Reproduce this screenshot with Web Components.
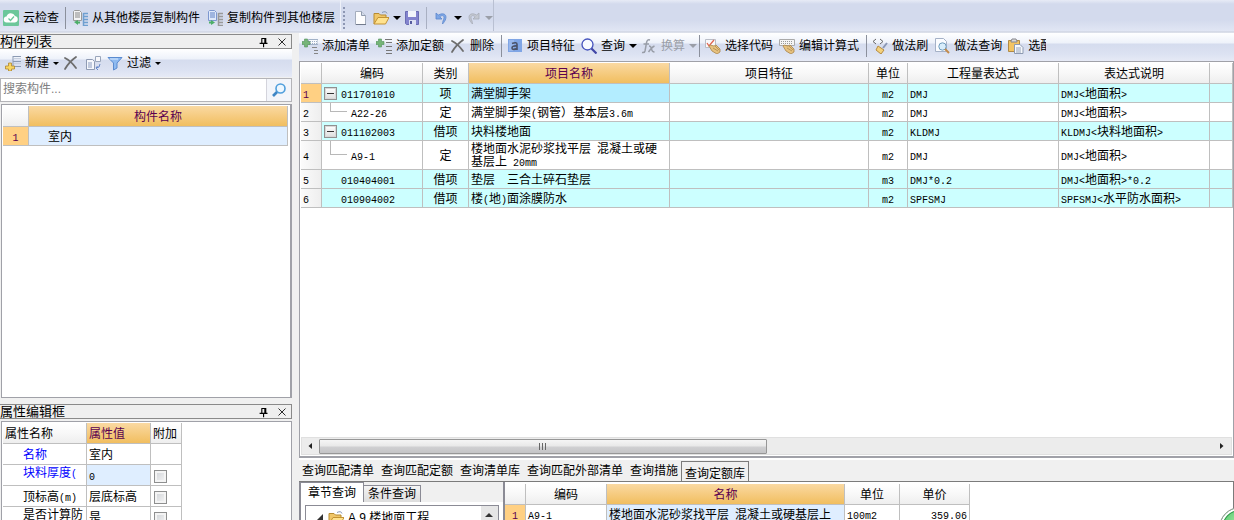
<!DOCTYPE html>
<html lang="zh-CN">
<head>
<meta charset="utf-8">
<title>构件做法</title>
<style>
html,body{height:100%}
body{margin:0;overflow:hidden;background:#f0f0f0;color:#000;font:12px/16px "Liberation Sans","Noto Sans CJK SC",sans-serif}
</style>
</head>
<body>
<cost-app></cost-app>
<script>
const ICONS = {
cloud:`<rect width="16" height="16" rx="1" fill="#6cc79b"/><path d="M4 12.500a3 3 0 0 1-.5-6 4.500 4.500 0 0 1 8.500-.5 3.300 3.300 0 0 1 0 6.500z" fill="#fff"/><path d="M5.500 8.500l2 2 3.500-4" fill="none" stroke="#6cc79b" stroke-width="1.300"/>`,
copyfrom:`<path d="M2.500.5h5l2 2v8h-8v-9z" fill="#f4f4f4" stroke="#9a9a9a"/><path d="M3 3h5M3 5h5M3 7h5" stroke="#888"/><path d="M11.500 3v13M11.500 3.500H16M11.500 6.500H16M11.500 9.500H16M11.500 12.500H16M11.500 15.500H16" stroke="#6f9fd0" stroke-width="1.500"/><path d="M2 12l4-2v1.500h2v2H6V15z" fill="#4cae68"/>`,
copyto:`<path d="M2.500.5h5l2 2v8h-8v-9z" fill="#dfe9fb" stroke="#7d97cf"/><path d="M3 3h5M3 5h5M3 7h5" stroke="#5f80c4"/><path d="M11.500 3v13M11.500 3.500H16M11.500 6.500H16M11.500 9.500H16M11.500 12.500H16M11.500 15.500H16" stroke="#999" stroke-width="1.500"/><path d="M8 12.500l-4-2.500v1.500H2v2h2V15z" fill="#4cae68"/>`,
page:`<path d="M3.500 1.500h6l4 4v9h-10z" fill="#fdfdfe" stroke="#a4adbd"/><path d="M9.500 1.500v4h4" fill="#d4dcea" stroke="#8f9aad"/><path d="M4 14.500h10" stroke="#727b8c"/>`,
folder:`<path d="M1 14V3.500h5L7.500 5H13v3" fill="#f0c668" stroke="#b78b31"/><path d="M1 14L5 7.500h11L12.500 14z" fill="#ffe28e" stroke="#c39334"/><path d="M9 2.500q4-2 5 1" fill="none" stroke="#8295b5"/>`,
save:`<path d="M1.500 1.500h13v13h-12l-1-1z" fill="#8384ce" stroke="#6a6db3"/><path d="M4 1h8v6H4z" fill="#f2f5fb"/><path d="M5 10h7v5H5z" fill="#dde1f3"/><path d="M6 11h2v3H6z" fill="#555b9d"/>`,
undo:`<path d="M2 3v6h6L5.800 6.800C9 4 11.500 6.500 9 11l-.5 3C14.500 8 12.500 1 4.300 5z" fill="#7ea7e6" stroke="#5c86cd" stroke-width=".8"/>`,
redo:`<path d="M14 3v6H8l2.200-2.200C7 4 4.500 6.500 7 11l.5 3C1.500 8 3.500 1 11.700 5z" fill="#c4c8d1" stroke="#a7acb8" stroke-width=".8"/>`,
create:`<path d="M8 1v11M8 1.500h8M8 6.500h8M8 11.500h8" stroke="#8c9bb3" fill="none"/><path d="M9 3.500h7M9 8.500h7" stroke="#c8d0de"/><path d="M3.500 8h3v3h3v3h-3v2h-3v-2h-3v-3h3z" fill="#f8d663" stroke="#ae8730" stroke-width=".8"/>`,
x:`<path d="M2 3q6 3 11 10M13 2Q6 7 2 14" stroke="#6d6d6d" stroke-width="1.800" fill="none" stroke-linecap="round"/>`,
transfer:`<path d="M1.500 4.500h6l2 2v8h-8z" fill="#f5f7fc" stroke="#8f9bb3"/><path d="M3 8h4M3 10h4M3 12h4" stroke="#8b9cbf"/><path d="M10.500 1.500h5v5h-5z" fill="#f8f8fb" stroke="#9aa6bb"/><path d="M15 9q0 4-4 4m1.500-2L11 13l2 2" fill="none" stroke="#6687c8"/>`,
funnel:`<path d="M1 2.500h14L10 8v5l-3.500 2V8z" fill="#8ebaf0" stroke="#5a8bd0"/><path d="M3 4h8" stroke="#d9eaff"/>`,
zoom:`<circle cx="9.500" cy="6.500" r="4.500" fill="#edf7ff" stroke="#4f9edc" stroke-width="1.600"/><path d="M6 10l-4 4" stroke="#3f86c5" stroke-width="2.600"/>`,
addlist:`<path d="M6.500 1.500H16v5H6.500z" fill="#f7f9fc" stroke="#a2b2c8"/><path d="M8 3.500h7M8 5.500h7" stroke="#9eaec7" stroke-dasharray="1 1"/><path d="M10 9.500h5M12 12.500h4M12 15.500h4" stroke="#858585"/><path d="M2.500 1h3v2.500H8v3H5.500V9h-3V6.500H0v-3h2.500z" fill="#75b578" stroke="#52905a" stroke-width=".6"/>`,
addquota:`<path d="M9 1.500h7M10 4.500h6M10 8.500h6M10 12.500h6M10 15.500h6" stroke="#777"/><path d="M2.500 1h3v2.500H8v3H5.500V9h-3V6.500H0v-3h2.500z" fill="#75b578" stroke="#52905a" stroke-width=".6"/>`,
feature:`<path d="M1 1h14v13H1z" fill="#7fa5e5"/><path d="M2 2h5v11H2z" fill="#98b7ec"/><path d="M5 5.500q5-2 5 1V12M10 8q-5-.5-5 2t5 .5" fill="none" stroke="#4a5268" stroke-width="1.600"/>`,
search:`<circle cx="6.500" cy="6.500" r="5.500" fill="#f8fbff" stroke="#4553bd" stroke-width="1.300"/><path d="M10.500 10.500l5 5" stroke="#4146a6" stroke-width="2.200"/>`,
fx:`<path d="M9 2q-3-1-3.500 3L4 13q-.5 2-3 1.500M2.500 6H8M8 8q2 0 2.500 3t3 3M13.500 8Q11 9 7.500 14" fill="none" stroke="#989da7" stroke-width="1.500"/>`,
pick:`<path d="M.5 1.500h10v8H.5z" fill="#f9f9fb" stroke="#b9bdc7"/><path d="M2 5l2 3 5-6" fill="none" stroke="#e0634f" stroke-width="1.300"/><path d="M5 7l4 1 2-1 4 4v3l-3 2-5-3-3-5z" fill="#e7c27f" stroke="#a98449" stroke-width=".8"/><path d="M8 10l5 3M10 8l4 4" stroke="#ad8a50" stroke-width=".8"/>`,
formula:`<path d="M.5 1.500h15v6H.5z" fill="#f5f5f5" stroke="#aaa"/><path d="M2 3.500h12M2 5.500h12" stroke="#999" stroke-dasharray="1 1"/><path d="M5 7l4 1 2-1 4 4v3l-3 2-5-3-3-5z" fill="#e7c27f" stroke="#a98449" stroke-width=".8"/><path d="M8 10l5 3M10 8l4 4" stroke="#ad8a50" stroke-width=".8"/>`,
brush:`<path d="M4 1L1 3.500 4 6M8 1l3 2.500L8 6" fill="none" stroke="#666"/><path d="M15 5l-4 5" stroke="#8a97b5" stroke-width="2"/><path d="M6 8l6 4-3 4-5-4z" fill="#f3d17c" stroke="#b68b40"/>`,
methodsearch:`<path d="M1.500.5h8l3 3v10h-11z" fill="#fbfcff" stroke="#a5b1c7"/><circle cx="8.500" cy="8.500" r="3.700" fill="#d8edfb" stroke="#6f9cbd"/><path d="M11 11l4 4" stroke="#c38b4b" stroke-width="2"/>`,
paste:`<path d="M.5 2.500h11v11H.5z" fill="#f3c462" stroke="#b18a45"/><path d="M3 3l1-2h4l1 2v1H3z" fill="#dadada" stroke="#85858a"/><path d="M6.500 6.500H12l3 3v6H6.500z" fill="#f7f9fc" stroke="#8d9ab1"/><path d="M8 10h5M8 12h5M8 14h5" stroke="#94a3bb"/>`,
pin:`<path d="M5 4h5v5M5.500 4v5M9 4v5M3 9.500h9M7.500 10v4" stroke="#000" stroke-width="1.300" fill="none"/>`,
close:`<path d="M4 4l8 8M12 4l-8 8" stroke="#222" stroke-width="1.100"/>`,
left:`<path d="M10 5v6L6.500 8z" fill="#222"/>`,
right:`<path d="M6 5v6L9.500 8z" fill="#222"/>`,
up:`<path d="M4 10h8L8 6z" fill="#333"/>`,
open:`<path d="M11 4v7H4z" fill="#333"/>`
};
const sheet = css => `<style>*{box-sizing:border-box}${css}</style>`;
/* Latin runs are set in half-width letters beside the full-width ideographs. */
const mixed = s => s.replace(/[\x20-\x7e]+/g, m => `<span class="half">${m.replace(/</g,'&lt;').replace(/>/g,'&gt;')}</span>`);
const HALF = `.half{font:10px/10px "Liberation Mono",monospace;white-space:pre-wrap}`;
const define = (name, html) => customElements.define(name, class extends HTMLElement{
  connectedCallback(){
    if(this.shadowRoot) return;
    const t = document.createElement('template');
    t.innerHTML = typeof html === 'function' ? html(this) : html;
    this.attachShadow({mode:'open'}).append(t.content.cloneNode(true));
  }
});

define('ui-icon', el => sheet(`:host{display:block;flex:none;width:16px;height:16px}svg{display:block;width:100%;height:100%}`) +
  `<svg viewBox="0 0 16 16" aria-hidden="true">${ICONS[el.getAttribute('name')]}</svg>`);

define('tool-button', el => sheet(`
:host{display:block;flex:none}
button{display:flex;align-items:center;gap:4px;height:24px;margin:0;padding:0 3px;border:0;background:none;font:inherit;color:inherit;white-space:nowrap}
:host([menu]) button{padding-right:1px}
button:disabled{color:#9a9ea8}
i{border:solid transparent;border-width:var(--caret,4px) var(--caret,4px) 0;border-top-color:currentColor}
`) + `<button ${el.hasAttribute('disabled')?'disabled':''} ${el.title?`aria-label="${el.title}"`:''}><ui-icon name="${el.getAttribute('icon')}"></ui-icon>${el.textContent.trim()?'<slot></slot>':''}${el.hasAttribute('menu')?'<i></i>':''}</button>`);

define('tool-bar', sheet(`
:host{display:flex;align-items:center;height:28px;flex:none;overflow:hidden;background:linear-gradient(#fff,#eef2fa 35%,#d5dcee 40%,#dce2f2 75%,#e6eaf6)}
::slotted(hr){flex:none;width:1px;height:22px;margin:0 2px 0 4px;border:0;background:#8b909c}
::slotted(hr.tight){margin-left:1px}
`) + `<slot></slot>`);

define('dock-title', sheet(`
:host{display:flex;align-items:center;flex:none;height:15px;border:1px solid #8a8a8a;border-left:0;background:#efefef}
h2{flex:1;margin:0;font-size:13px;line-height:13px;font-weight:400}
button{display:block;width:18px;height:13px;border:0;padding:0 2px;background:none;overflow:hidden}
ui-icon{width:14px;height:14px}
`) + `<h2><slot></slot></h2><button aria-label="固定"><ui-icon name="pin"></ui-icon></button><button aria-label="关闭"><ui-icon name="close"></ui-icon></button>`);

define('search-box', sheet(`
:host{display:flex;flex:none;height:24px;border:1px solid #b4b4b8;background:#fff}
input{flex:1;min-width:0;border:0;border-right:1px solid #d4d4dc;padding:0 2px 2px;font:inherit;color:#333;outline:0}
input::placeholder{color:#808080;opacity:1}
button{width:24px;border:0;padding:0 4px;background:#f3f5fa}
`) + `<input type="text" aria-label="搜索构件" placeholder="搜索构件..."><button aria-label="搜索"><ui-icon name="zoom"></ui-icon></button>`);

const GRID = HALF + `
:host{display:block}
table{border-collapse:separate;border-spacing:0;table-layout:fixed;line-height:12px}
th,td{padding:2px 2px 0;border:solid #bfbfbf;border-width:0 1px 1px 0;font-weight:400;text-align:left;overflow:hidden}
thead th{height:21px;text-align:center;background:linear-gradient(#fff,#f8f8f8 50%,#eee)}
thead th.on{background:linear-gradient(#fad9a2,#f1be5f);color:#5a0050}
td{background:#fff}
tbody th{background:linear-gradient(90deg,#fbfbfb,#eee)}
tbody th.on{background:#ffd083;color:#5a0050}
.c{text-align:center}.r{text-align:right}`;

/* Grid of rows; the first row is the current one. */
const grid = (cols, rows, css) => {
  const fixed = cols.every(c => c.w);
  return sheet(GRID + css) + `<table style="width:${fixed ? cols.reduce((a,c)=>a+c.w,0)+'px' : '100%'}"><colgroup>${cols.map(c=>`<col${c.w?` style="width:${c.w}px"`:''}>`).join('')}</colgroup>
  <thead><tr>${cols.map(c=>`<th class="${c.on?'on':''}" scope="col">${c.t}</th>`).join('')}</tr></thead>
  <tbody>${rows.map((r,n)=>`<tr class="${r.cls||''}"><th scope="row" class="${n===0?'on':''}">${mixed(String(n+1))}</th>${r.cells.map((c,i)=>`<td class="${cols[i+1].a||''} ${n===0&&cols[i+1].on?'sel':''}">${i===0&&r.tree==='open'?'<button aria-label="折叠"></button>':''}${i===0&&r.tree==='child'?'<b></b>':''}${mixed(c)}</td>`).join('')}</tr>`).join('')}</tbody></table>`;
};

define('component-list', grid([{w:26,t:''},{w:0,t:'构件名称',on:1}], [{cells:['室内']}],
  `tbody th{text-align:center}tbody tr{height:19px}tbody td{padding-left:19px}td.sel{background:#dfeeff}`));

define('item-grid', grid([
  {w:21,t:''},{w:101,t:'编码',a:'code'},{w:46,t:'类别',a:'c'},{w:201,t:'项目名称',on:1},{w:199,t:'项目特征'},
  {w:39,t:'单位',a:'c'},{w:151,t:'工程量表达式'},{w:151,t:'表达式说明'},{t:''}],
 [{cls:'q',tree:'open',cells:['011701010','项','满堂脚手架','','m2','DMJ','DMJ<地面积>','']},
  {tree:'child',cells:['A22-26','定','满堂脚手架(钢管）基本层3.6m','','m2','DMJ','DMJ<地面积>','']},
  {cls:'q',tree:'open',cells:['011102003','借项','块料楼地面','','m2','KLDMJ','KLDMJ<块料地面积>','']},
  {cls:'tall',tree:'child',cells:['A9-1','定','楼地面水泥砂浆找平层 混凝土或硬基层上 20mm','','m2','DMJ','DMJ<地面积>','']},
  {cls:'q',cells:['010404001','借项','垫层　三合土碎石垫层','','m3','DMJ*0.2','DMJ<地面积>*0.2','']},
  {cls:'q',cells:['010904002','借项','楼(地)面涂膜防水','','m2','SPFSMJ','SPFSMJ<水平防水面积>','']}],
 `tbody tr{height:19px}tbody tr.tall{height:29px}.tall td{line-height:13px}.q td{background:#cff}.q td.sel{background:#b3edff}
 td:nth-child(4){padding-right:3px}
 td.code{position:relative;padding-left:19px}
 td.code:has(b){padding-left:29px}
 td button{position:absolute;left:2px;top:3px;width:13px;height:13px;padding:0;border:1px solid #909090;outline:1px solid #d8d8d8;outline-offset:-2px;background:linear-gradient(#333,#333) center/7px 1px no-repeat,linear-gradient(#fff,#ddd)}
 td b{position:absolute;left:8px;top:0;bottom:50%;width:17px;border:solid #b8b8b8;border-width:0 0 1px 1px}`));

define('quota-grid', grid([{w:21,t:''},{w:81,t:'编码'},{w:238,t:'名称',on:1},{w:55,t:'单位'},{w:70,t:'单价',a:'r'}],
 [{cells:['A9-1','楼地面水泥砂浆找平层 混凝土或硬基层上','100m2','359.06']}],
 `tbody th{text-align:center}tbody tr{height:19px}td.sel{background:#dfeeff}`));

define('property-grid', () => {
  const rows = [['名称','室内',0,'key'],['块料厚度(','0',1,'key top sel'],['顶标高(m)','层底标高',1,''],['是否计算防','是',1,'top']];
  return sheet(GRID + `table{width:179px}tbody tr{height:21px}thead th{text-align:left}
  tbody th{background:#fff;padding-left:20px;white-space:nowrap}.key th{color:#00f}.top th{vertical-align:top}.sel td.v{background:#dfeeff}
  input{appearance:none;display:block;width:13px;height:13px;margin:1px 0 0 1px;border:1px solid #8e8f8f;background:linear-gradient(135deg,#cfd2d6,#f6f6f6);box-shadow:inset 0 0 0 2px #f4f4f4}`) +
  `<table><colgroup><col style="width:84px"><col style="width:64px"><col style="width:31px"></colgroup>
  <thead><tr><th scope="col">属性名称</th><th scope="col" class="on">属性值</th><th scope="col">附加</th></tr></thead><tbody>` +
  rows.map(r=>`<tr class="${r[3]}"><th scope="row">${mixed(r[0])}</th><td class="v">${mixed(r[1])}</td><td>${r[2]?`<input type="checkbox" aria-label="${r[0]} 附加">`:''}</td></tr>`).join('') + `</tbody></table>`;
});

define('scroll-strip', sheet(`
:host{display:flex;align-items:center;flex:none;height:18px;margin:0 1px 1px 0;border:1px solid #e0e0e0;background:#ececec}
button{border:0;padding:0;background:none;width:17px}
.track{flex:1;height:15px}
.thumb{display:flex;justify-content:center;align-items:center;gap:2px;width:50%;height:15px;border:1px solid #979797;border-radius:1px;background:linear-gradient(#f5f5f5,#e8e8e8 48%,#d0d0d2 52%,#c4c4c6)}
i{width:1px;height:7px;background:#666}
`) + `<button aria-label="向左"><ui-icon name="left"></ui-icon></button><div class="track"><div class="thumb"><i></i><i></i><i></i></div></div><button aria-label="向右"><ui-icon name="right"></ui-icon></button>`);

define('query-pane', sheet(`
:host{display:flex;flex-direction:column;min-height:0;border-top:2px solid #fff;padding-top:1px}
button{font:inherit;color:inherit;border:0;background:none;padding:0;line-height:14px;white-space:nowrap}
nav{display:flex;align-items:center;gap:7px;height:20px;padding-left:3px;flex:none}
nav .on{align-self:flex-end;height:20px;margin-left:-4px;padding:4px 3px 0;border:1px solid #7b7b7b;border-bottom:0}
.body{display:flex;flex:1;min-height:0;border-top:1px solid #7b7b7b;border-right:1px solid #7b7b7b;background:#fff;overflow:hidden}
.tree{display:flex;flex-direction:column;width:205px;flex:none;border:1px solid #8b8b95;border-width:0 1px 0 2px;background:#fff}
.tabs{display:flex;align-items:flex-end;height:20px;flex:none;background:#f0f0f0}
.tabs button{height:17px;padding:0 4px;border:1px solid #8b8b95;border-bottom:0;background:linear-gradient(#f4f4f4,#ddd)}
.tabs .on{height:20px;padding:0 7px;border-width:1px 1px 0 0;background:#fff;margin-right:-1px}
.view{display:flex;flex:1;min-height:0;margin:3px 4px 0 4px;border:1px solid #8b8b95;border-bottom:0;overflow:hidden}
.node{display:flex;align-items:flex-start;flex:1;padding:4px 0 0 6px}
.node span{padding-left:4px}
.view button{width:17px;height:17px;background:#e6e6e6}
quota-grid{flex:1;padding-top:2px;border-left:1px solid #8b8b95}
`) + `<nav><button>查询匹配清单</button><button>查询匹配定额</button><button>查询清单库</button><button>查询匹配外部清单</button><button>查询措施</button><button class="on">查询定额库</button></nav>
<div class="body"><div class="tree"><div class="tabs"><button class="on">章节查询</button><button>条件查询</button></div>
<div class="view"><div class="node"><ui-icon name="open"></ui-icon><ui-icon name="folder"></ui-icon><span>A.9 楼地面工程</span></div><button aria-label="向上"><ui-icon name="up"></ui-icon></button></div></div>
<quota-grid></quota-grid></div>`);

define('main-bar', sheet(`
:host{display:flex;height:33px;background:linear-gradient(#e7ebf6,#d3daed 4px,#d3daed 60%,#e1e6f4 31px,#c9cedb 32px,#eef1f8 33px)}
.g{display:flex;align-items:center;height:31px;border:1px solid #eef1f9;border-width:0 1px 0 0;padding-top:4px}
.a{gap:1px;padding-right:2px}
hr{flex:none;width:1px;height:22px;margin:0 2px;border:0;background:#8b909c}
.b{border-color:#b9c0d2}
.b hr{margin:0 4px;background:#a9b0c2}
.grip{width:2px;height:22px;margin:0 4px 0 2px;background:repeating-linear-gradient(#8d97b3 0 2px,transparent 2px 4px)}
.b tool-button{margin-right:-1px}
`) + `<div class="g a"><tool-button icon="cloud">云检查</tool-button><hr><tool-button icon="copyfrom">从其他楼层复制构件</tool-button><tool-button icon="copyto">复制构件到其他楼层</tool-button></div>
<div class="g b"><div class="grip"></div><tool-button icon="page" title="新建"></tool-button><tool-button icon="folder" title="打开" menu></tool-button><tool-button icon="save" title="保存"></tool-button><hr><tool-button icon="undo" title="撤销" menu></tool-button><tool-button icon="redo" title="重做" menu disabled></tool-button></div>`);

define('round-badge', sheet(`
:host{position:absolute;right:-27px;bottom:-29px;width:42px;height:42px;border-radius:50%;border:1px solid #999;background:radial-gradient(circle at 50% 40%,#a5efa5,#2fae50);box-shadow:inset 0 0 0 2px #fff,inset 0 0 0 3px #2b9a48}
`));

define('cost-app', sheet(`
:host{display:flex;flex-direction:column;height:100vh;position:relative;overflow:hidden}
main{display:grid;grid-template-columns:292px minmax(0,1fr);gap:7px;flex:1;min-height:0}
.col,section{display:flex;flex-direction:column;min-height:0;min-width:0}
.left{padding-top:1px}
.list{flex:1}
.list tool-bar{--caret:3px;padding-left:2px}
.props{flex:0 0 116px;margin-top:6px}
.frame{flex:1;min-height:0;overflow:hidden;border:1px solid #a0a1a8;background:#fff}
.list .frame{margin:2px 0 0 1px;padding:1px 2px 0 1px;border-right-width:2px}
.props .frame{margin:2px 0 0 1px;padding:1px 0 0 1px;border-bottom:0}
search-box{margin-top:1px}
.items{flex:1}
.items tool-bar{padding-bottom:2px}
.items .frame{display:flex;flex-direction:column;border-width:1px 1px 2px;padding:1px 0 0 1px}
item-grid{flex:1;min-height:0}
query-pane{flex:0 0 62px}
.cut{width:41px;overflow:hidden}
`) + `<main-bar></main-bar><main>
<div class="col left"><section class="list"><dock-title>构件列表</dock-title>
<tool-bar><tool-button icon="create" menu>新建</tool-button><tool-button icon="x" title="删除"></tool-button><tool-button icon="transfer" title="复制"></tool-button><tool-button icon="funnel" menu>过滤</tool-button></tool-bar>
<search-box></search-box><div class="frame"><component-list></component-list></div></section>
<section class="props"><dock-title>属性编辑框</dock-title><div class="frame"><property-grid></property-grid></div></section></div>
<div class="col"><section class="items"><tool-bar><tool-button icon="addlist">添加清单</tool-button><tool-button icon="addquota">添加定额</tool-button><tool-button icon="x">删除</tool-button><hr><tool-button icon="feature">项目特征</tool-button><tool-button icon="search" menu>查询</tool-button><tool-button icon="fx" menu disabled>换算</tool-button><hr class="tight"><tool-button icon="pick">选择代码</tool-button><tool-button icon="formula">编辑计算式</tool-button><hr><tool-button icon="brush">做法刷</tool-button><tool-button icon="methodsearch">做法查询</tool-button><tool-button icon="paste" class="cut">选配</tool-button></tool-bar>
<div class="frame"><item-grid></item-grid><scroll-strip></scroll-strip></div></section>
<query-pane></query-pane></div></main><round-badge></round-badge>`);
</script>
</body>
</html>
